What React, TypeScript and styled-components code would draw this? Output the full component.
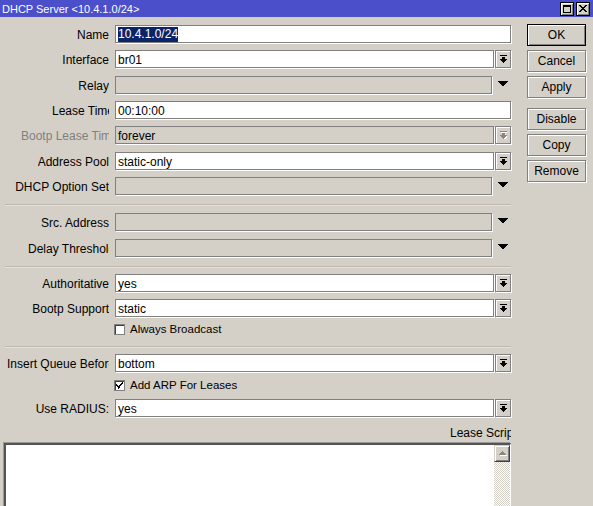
import { ReactNode } from 'react';
import styled, { createGlobalStyle } from 'styled-components';

const GlobalStyle = createGlobalStyle`
    html, body {
        margin: 0;
        padding: 0;
        background: #d4d0c8;
        overflow: hidden;
    }
    body {
        font-family: "Liberation Sans", Arial, sans-serif;
        font-size: 12px;
        color: #000;
    }
`;

const ComboIcon = ({ disabled }: { disabled?: boolean }) => {
    const c = disabled ? '#8a8780' : '#000';
    return (
        <svg width="7" height="8" viewBox="0 0 7 8" shapeRendering="crispEdges">
            {disabled && <path d="M1 1h7v1H1zM3 3h3v2H3zM1 5h7v1H1zM2 6h5v1H2zM3 7h3v1H3z" fill="#fff" />}
            <path d="M0 0h7v1H0zM2 2h3v2H2zM0 4h7v1H0zM1 5h5v1H1zM2 6h3v1H2zM3 7h1v1H3z" fill={c} />
        </svg>
    );
};

const DownTriangle = () => (
    <svg width="10" height="6" viewBox="0 0 10 6" shapeRendering="crispEdges">
        <path d="M0 0h10v1H0zM1 1h8v1H1zM2 2h6v1H2zM3 3h4v1H3zM4 4h2v1H4z" fill="#000" />
    </svg>
);

const CheckMark = () => (
    <svg width="9" height="9" viewBox="0 0 9 9" shapeRendering="crispEdges">
        <path d="M7 1h1v1H7zM6 2h2v1H6zM5 3h2v1H5zM1 3h1v1H1zM1 4h2v1H1zM4 4h2v1H4zM2 5h3v1H2zM3 6h2v1H3zM3 7h1v1H3z" fill="#000" />
    </svg>
);

const Field = ({ children, disabled, combo, arrow, comboDisabled }: {
    children?: ReactNode,
    disabled?: boolean,
    combo?: boolean,
    arrow?: boolean,
    comboDisabled?: boolean,
}) => (
    <FieldWrap>
        <TextBox $disabled={disabled}>{children}</TextBox>
        {combo && <ComboButton><ComboIcon disabled={comboDisabled} /></ComboButton>}
        {arrow && <ArrowSlot><DownTriangle /></ArrowSlot>}
    </FieldWrap>
);

const App = () => {
    return (
        <Window>
            <GlobalStyle />
            <TitleBar>
                <span>DHCP Server &lt;10.4.1.0/24&gt;</span>
                <TitleButtons>
                    <TitleButton>
                        <svg width="8" height="8" viewBox="0 0 8 8" shapeRendering="crispEdges">
                            <path d="M0 0h8v2H0zM0 2h1v6H0zM7 2h1v6H7zM0 7h8v1H0z" fill="#000" />
                        </svg>
                    </TitleButton>
                    <TitleButton>
                        <svg width="8" height="7" viewBox="0 0 8 7" shapeRendering="crispEdges">
                            <path d="M0 0h2v1H0zM6 0h2v1H6zM1 1h2v1H1zM5 1h2v1H5zM2 2h4v1H2zM3 3h2v1H3zM2 4h4v1H2zM1 5h2v1H1zM5 5h2v1H5zM0 6h2v1H0zM6 6h2v1H6z" fill="#000" />
                        </svg>
                    </TitleButton>
                </TitleButtons>
            </TitleBar>
            <Body>
                <Form>
                    <Section $gap={7.33}>
                        <Row>
                            <Label>Name</Label>
                            <Field><Selected>10.4.1.0/24</Selected></Field>
                        </Row>
                        <Row>
                            <Label>Interface</Label>
                            <Field combo>br01</Field>
                        </Row>
                        <Row>
                            <Label>Relay</Label>
                            <Field disabled arrow />
                        </Row>
                        <Row>
                            <Label $clip={57}>Lease Time</Label>
                            <Field>00:10:00</Field>
                        </Row>
                        <Row>
                            <Label $muted $clip={88}>Bootp Lease Time</Label>
                            <Field disabled combo comboDisabled>forever</Field>
                        </Row>
                        <Row>
                            <Label>Address Pool</Label>
                            <Field combo>static-only</Field>
                        </Row>
                        <Row>
                            <Label>DHCP Option Set</Label>
                            <Field disabled arrow />
                        </Row>
                    </Section>
                    <Separator $top={9} $bottom={7} />
                    <Section $gap={8}>
                        <Row>
                            <Label>Src. Address</Label>
                            <Field disabled arrow />
                        </Row>
                        <Row>
                            <Label $clip={81}>Delay Threshold</Label>
                            <Field disabled arrow />
                        </Row>
                    </Section>
                    <Separator $top={9} $bottom={6} />
                    <Section $gap={7}>
                        <Row>
                            <Label>Authoritative</Label>
                            <Field combo>yes</Field>
                        </Row>
                        <Row>
                            <Label>Bootp Support</Label>
                            <Field combo>static</Field>
                        </Row>
                        <CheckRow>
                            <span />
                            <CheckLabel>
                                <CheckBox />
                                Always Broadcast
                            </CheckLabel>
                        </CheckRow>
                    </Section>
                    <Separator $top={11} $bottom={6} />
                    <Section $gap={8}>
                        <Row>
                            <Label $clip={102}>Insert Queue Before</Label>
                            <Field combo>bottom</Field>
                        </Row>
                        <CheckRow>
                            <span />
                            <CheckLabel>
                                <CheckBox><CheckMark /></CheckBox>
                                Add ARP For Leases
                            </CheckLabel>
                        </CheckRow>
                        <Row>
                            <Label>Use RADIUS:</Label>
                            <Field combo>yes</Field>
                        </Row>
                    </Section>
                    <ScriptLabel>Lease Script</ScriptLabel>
                    <ScriptBox>
                        <ScrollBar>
                            <ScrollButton>
                                <svg width="9" height="6" viewBox="0 0 9 6" shapeRendering="crispEdges">
                                    <path d="M4 1h1v1H4zM3 2h3v1H3zM2 3h5v1H2zM1 4h7v1H1z" fill="#8a8780" />
                                    <path d="M2 5h7v1H2z" fill="#fff" />
                                </svg>
                            </ScrollButton>
                            <ScrollTrack />
                        </ScrollBar>
                    </ScriptBox>
                </Form>
                <Buttons>
                    <ActionButton $default>OK</ActionButton>
                    <ActionButton>Cancel</ActionButton>
                    <ActionButton>Apply</ActionButton>
                    <ActionButton $space>Disable</ActionButton>
                    <ActionButton>Copy</ActionButton>
                    <ActionButton>Remove</ActionButton>
                </Buttons>
            </Body>
        </Window>
    );
};

const Window = styled.div`
    width: 593px;
    height: 506px;
    display: flex;
    flex-direction: column;
    background: #d4d0c8;
    overflow: hidden;
`;

const TitleBar = styled.div`
    height: 17px;
    flex-shrink: 0;
    display: flex;
    align-items: center;
    justify-content: space-between;
    padding: 0 3px 0 2px;
    background: #4b4fc9;
    color: #fff;
    font-size: 11px;
`;

const TitleButtons = styled.div`
    display: flex;
    gap: 2px;
`;

const TitleButton = styled.div`
    width: 14px;
    height: 14px;
    box-sizing: border-box;
    display: flex;
    align-items: center;
    justify-content: center;
    background: #d4d0c8;
    border: 1px solid #000;
    box-shadow: inset 1px 1px 0 #fff, inset -1px -1px 0 #808080;
`;

const Body = styled.div`
    display: flex;
    flex: 1;
    min-height: 0;
`;

const Form = styled.div`
    width: 511px;
    box-sizing: border-box;
    padding: 8px 0 0 4px;
    display: flex;
    flex-direction: column;
    flex-shrink: 0;
`;

const Section = styled.div<{ $gap: number }>`
    display: flex;
    flex-direction: column;
    flex-shrink: 0;
    gap: ${p => p.$gap}px;
`;

const Row = styled.div`
    display: grid;
    grid-template-columns: 105px 1fr;
    column-gap: 6px;
    height: 18px;
    flex-shrink: 0;
    align-items: center;
`;

const Label = styled.div<{ $muted?: boolean; $clip?: number }>`
    justify-self: end;
    white-space: nowrap;
    overflow: hidden;
    padding-top: 2px;
    max-width: ${p => (p.$clip ? `${p.$clip}px` : '105px')};
    color: ${p => (p.$muted ? '#808080' : '#000')};
`;

const FieldWrap = styled.div`
    display: flex;
    gap: 1px;
    height: 18px;
`;

const TextBox = styled.div<{ $disabled?: boolean }>`
    flex: 1;
    box-sizing: border-box;
    height: 18px;
    padding: 2px 0 0 2px;
    line-height: 14px;
    white-space: nowrap;
    border: 1px solid #808080;
    box-shadow: 1px 1px 0 #fff;
    background: ${p => (p.$disabled ? '#d4d0c8' : '#fff')};
`;

const Selected = styled.span`
    display: inline-block;
    vertical-align: top;
    margin-top: -1px;
    background: #0a246a;
    color: #fff;
    line-height: 15px;
`;

const ComboButton = styled.div`
    width: 16px;
    height: 18px;
    box-sizing: border-box;
    display: flex;
    align-items: center;
    justify-content: center;
    background: #d4d0c8;
    border: 1px solid #808080;
    box-shadow: inset 1px 1px 0 #fff, 1px 1px 0 #fff;
`;

const ArrowSlot = styled.div`
    width: 16px;
    display: flex;
    align-items: center;
    justify-content: center;
    padding-left: 2px;
    padding-bottom: 2px;
`;

const Separator = styled.div<{ $top: number; $bottom: number }>`
    flex-shrink: 0;
    margin: ${p => p.$top}px 0 ${p => p.$bottom}px 1px;
    border-top: 1px solid #bdb9b1;
    border-bottom: 1px solid #e4e1dc;
`;

const CheckRow = styled.div`
    display: grid;
    grid-template-columns: 105px 1fr;
    column-gap: 6px;
    height: 11px;
    flex-shrink: 0;
    align-items: center;
`;

const CheckLabel = styled.div`
    display: flex;
    align-items: center;
    gap: 5px;
    margin-left: -1px;
    white-space: nowrap;
    line-height: 11px;
    font-size: 11.5px;
`;

const CheckBox = styled.div`
    width: 11px;
    height: 11px;
    box-sizing: border-box;
    display: flex;
    align-items: center;
    justify-content: center;
    background: #fff;
    border: 1px solid #808080;
    box-shadow: inset 1px 1px 0 #404040;
`;

const ScriptLabel = styled.div`
    align-self: flex-end;
    flex-shrink: 0;
    max-width: 61px;
    overflow: hidden;
    white-space: nowrap;
    margin-top: 8px;
    line-height: 14px;
    padding-top: 1px;
    margin-bottom: -1px;
`;

const ScriptBox = styled.div`
    margin-top: 4px;
    height: 90px;
    flex-shrink: 0;
    box-sizing: border-box;
    display: flex;
    justify-content: flex-end;
    background: #fff;
    border-top: 2px solid #555;
    border-left: 2px solid #555;
    border-right: 1px solid #fff;
    box-shadow: -1px -1px 0 #999;
`;

const ScrollBar = styled.div`
    width: 16px;
    display: flex;
    flex-direction: column;
`;

const ScrollButton = styled.div`
    height: 17px;
    box-sizing: border-box;
    display: flex;
    align-items: center;
    justify-content: center;
    background: #d4d0c8;
    border: 1px solid #d4d0c8;
    border-right-color: #404040;
    border-bottom-color: #404040;
    box-shadow: inset 1px 1px 0 #fff, inset -1px -1px 0 #808080;
`;

const ScrollTrack = styled.div`
    flex: 1;
    background-image: conic-gradient(#fff 25%, #d4d0c8 0 50%, #fff 0 75%, #d4d0c8 0);
    background-size: 2px 2px;
`;

const Buttons = styled.div`
    margin-left: 16px;
    padding-top: 7px;
    width: 59px;
    display: flex;
    flex-direction: column;
    gap: 4px;
`;

const ActionButton = styled.div<{ $default?: boolean; $space?: boolean }>`
    height: 22px;
    box-sizing: border-box;
    display: flex;
    align-items: center;
    justify-content: center;
    margin-top: ${p => (p.$space ? '6px' : '0')};
    background: #d4d0c8;
    border: 1px solid ${p => (p.$default ? '#000' : '#808080')};
    box-shadow: inset 1px 1px 0 #fff${p => (p.$default ? ', inset -1px -1px 0 #808080' : ', 1px 1px 0 #fff')};
`;

export default App;
